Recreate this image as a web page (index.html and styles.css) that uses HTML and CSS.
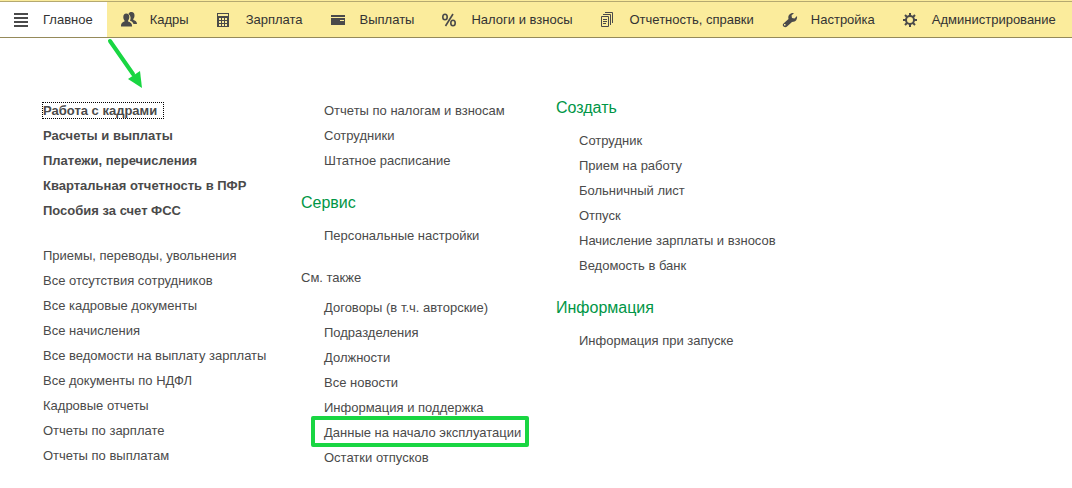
FILE: index.html
```
<!DOCTYPE html>
<html lang="ru">
<head>
  <meta charset="UTF-8">
  <meta name="viewport" content="width=device-width, initial-scale=1.0">
  <title>Главное</title>
  <link rel="stylesheet" href="styles.css">
</head>
<body>

  <nav class="sections">
    <a class="section active" href="#">
      <svg class="icon" viewBox="0 0 15 16"><path d="M0 2h14M0 6h14M0 10h14M0 14h14" stroke="#4a4a4a" stroke-width="2"/></svg>
      Главное
    </a>
    <a class="section" href="#">
      <svg class="icon" viewBox="0 0 15 16"><path d="M7.500 2c.5-1.500 1.500-2 3-2C12.500 0 13.500 1.500 13.500 3.500c0 1.500-.5 2.500-1.200 3.500v1c2 .7 3.700 1.500 3.700 4h-3.500c-.5-1.500-1.500-2.500-3.500-3.200C10 6.500 10 4 7.500 2z"/><path d="M2.300 5c0-2 1-3.500 3-3.500s3 1.500 3 3.500c0 1.500-.5 2.500-1.200 3.500v1c2 .7 4 1.500 4 5H0c0-3.500 1.500-4.300 3.500-5v-1C2.800 7.500 2.300 6.500 2.300 5z"/></svg>
      Кадры
    </a>
    <a class="section" href="#">
      <svg class="icon" viewBox="0 0 15 16"><path fill-rule="evenodd" d="M0 1h12v14H0zM1 2v2h10V2zM2 6v2h2V6zM5 6v2h2V6zM8 6v2h2V6zM2 9v2h2V9zM5 9v2h2V9zM8 9v2h2V9zM2 12v2h2v-2zM5 12v2h2v-2zM8 12v2h2v-2z"/></svg>
      Зарплата
    </a>
    <a class="section" href="#">
      <svg class="icon" viewBox="0 0 15 16"><path fill-rule="evenodd" d="M0 3h14v2H0zM0 6h14v7H0zM9 8v1h4V8z"/></svg>
      Выплаты
    </a>
    <a class="section" href="#">
      <svg class="icon" viewBox="0 0 15 16"><g fill="none" stroke="#4a4a4a" stroke-width="1.600"><ellipse cx="3" cy="5" rx="2.200" ry="2.700"/><ellipse cx="11" cy="11" rx="2.200" ry="2.700"/><path d="M11 2L3.500 14"/></g></svg>
      Налоги и взносы
    </a>
    <a class="section" href="#">
      <svg class="icon" viewBox="0 0 15 16"><g fill="none" stroke="#4a4a4a"><path d="M.5 4.500h7v10h-7zM2 2.500h7.500V13M4 .5h7.500V11M2 7.500h4M2 9.500h4M2 11.500h3"/></g></svg>
      Отчетность, справки
    </a>
    <a class="section" href="#">
      <svg class="icon" viewBox="0 0 15 16"><path fill-rule="evenodd" d="M12 1L9.500 3.500l.5 2.500 2.500.5L15 4c.5 3-1 6-5 6l-5 4.500c-1 1-2.500 1-3.500 0s-1-2 0-3L6.500 7c-1-4 2-6.500 5.500-6zM2 12v1.500h1.500V12z"/></svg>
      Настройка
    </a>
    <a class="section" href="#">
      <svg class="icon" viewBox="0 0 15 16"><g fill="none" stroke="#4a4a4a"><circle cx="7" cy="8" r="4" stroke-width="2"/><path stroke-width="2" d="M7 1v3M7 12v3M0 8h3M11 8h3M2 3l2 2M10 11l2 2M12 3l-2 2M4 11l-2 2"/></g></svg>
      Администрирование
    </a>
  </nav>

  <svg class="arrow" viewBox="0 0 36 50"><path d="M3 3L26 36" stroke="#19d642" stroke-width="4" stroke-linecap="round"/><path d="M35 50L21 41l12-8z" fill="#19d642"/></svg>

  <main class="menu">
    <div class="column offset">
      <ul class="links important">
        <li><a class="focused" href="#">Работа с кадрами</a></li>
        <li><a href="#">Расчеты и выплаты</a></li>
        <li><a href="#">Платежи, перечисления</a></li>
        <li><a href="#">Квартальная отчетность в ПФР</a></li>
        <li><a href="#">Пособия за счет ФСС</a></li>
      </ul>
      <ul class="links">
        <li><a href="#">Приемы, переводы, увольнения</a></li>
        <li><a href="#">Все отсутствия сотрудников</a></li>
        <li><a href="#">Все кадровые документы</a></li>
        <li><a href="#">Все начисления</a></li>
        <li><a href="#">Все ведомости на выплату зарплаты</a></li>
        <li><a href="#">Все документы по НДФЛ</a></li>
        <li><a href="#">Кадровые отчеты</a></li>
        <li><a href="#">Отчеты по зарплате</a></li>
        <li><a href="#">Отчеты по выплатам</a></li>
      </ul>
    </div>

    <div class="column offset">
      <ul class="links indent">
        <li><a href="#">Отчеты по налогам и взносам</a></li>
        <li><a href="#">Сотрудники</a></li>
        <li><a href="#">Штатное расписание</a></li>
      </ul>
      <h2>Сервис</h2>
      <ul class="links indent">
        <li><a href="#">Персональные настройки</a></li>
      </ul>
      <h3>См. также</h3>
      <ul class="links indent">
        <li><a href="#">Договоры (в т.ч. авторские)</a></li>
        <li><a href="#">Подразделения</a></li>
        <li><a href="#">Должности</a></li>
        <li><a href="#">Все новости</a></li>
        <li><a href="#">Информация и поддержка</a></li>
        <li><a class="marked" href="#">Данные на начало эксплуатации</a></li>
        <li><a href="#">Остатки отпусков</a></li>
      </ul>
    </div>

    <div class="column">
      <h2>Создать</h2>
      <ul class="links indent">
        <li><a href="#">Сотрудник</a></li>
        <li><a href="#">Прием на работу</a></li>
        <li><a href="#">Больничный лист</a></li>
        <li><a href="#">Отпуск</a></li>
        <li><a href="#">Начисление зарплаты и взносов</a></li>
        <li><a href="#">Ведомость в банк</a></li>
      </ul>
      <h2>Информация</h2>
      <ul class="links indent">
        <li><a href="#">Информация при запуске</a></li>
      </ul>
    </div>
  </main>

</body>
</html>
```
FILE: styles.css
```
body {
  margin: 0;
  background: #fff;
  color: #4a4a4a;
  font-family: "Liberation Sans", Arial, sans-serif;
  font-size: 13px;
}

a {
  color: inherit;
  text-decoration: none;
}

/* section bar */
.sections {
  display: flex;
  background: #fbec9c;
  border-bottom: 1px solid #958a5a;
  box-shadow: inset 0 1px #fbec9c, inset 0 2px #b5a970;
  padding-top: 2px;
}

.section {
  display: flex;
  align-items: center;
  gap: 14px;
  height: 35px;
  padding: 0 14px;
  color: #333;
  white-space: nowrap;
}

.section.active {
  background: #fff;
}

.icon {
  flex: none;
  width: 15px;
  height: 16px;
  fill: #4a4a4a;
  overflow: visible;
}

.arrow {
  position: absolute;
  left: 107px;
  top: 38px;
  width: 36px;
  height: 50px;
}

/* menu columns */
.menu {
  display: grid;
  grid-template-columns: 258px 255px 1fr;
  padding: 55px 20px 20px 43px;
}

.offset {
  padding-top: 5px;
}

.links {
  list-style: none;
  margin: 0;
  padding: 0;
  line-height: 25px;
  white-space: nowrap;
}

.links.indent {
  padding-left: 23px;
}

.links.important {
  margin-bottom: 20px;
  font-weight: bold;
}

h2 {
  margin: 15px 0 5px;
  color: #009646;
  font-size: 16px;
  font-weight: normal;
  line-height: 30px;
}

.column > h2:first-child {
  margin-top: 0;
}

h3 {
  margin: 17px 0 5px;
  font-size: 13px;
  font-weight: normal;
  line-height: 25px;
}

.focused {
  padding-right: 6px;
  outline: 1px dotted #000;
}

.marked {
  position: relative;
}

.marked::after {
  content: "";
  position: absolute;
  inset: -9px -8px -7px -13px;
  border: 4px solid #19d642;
  border-radius: 2px;
}
```
